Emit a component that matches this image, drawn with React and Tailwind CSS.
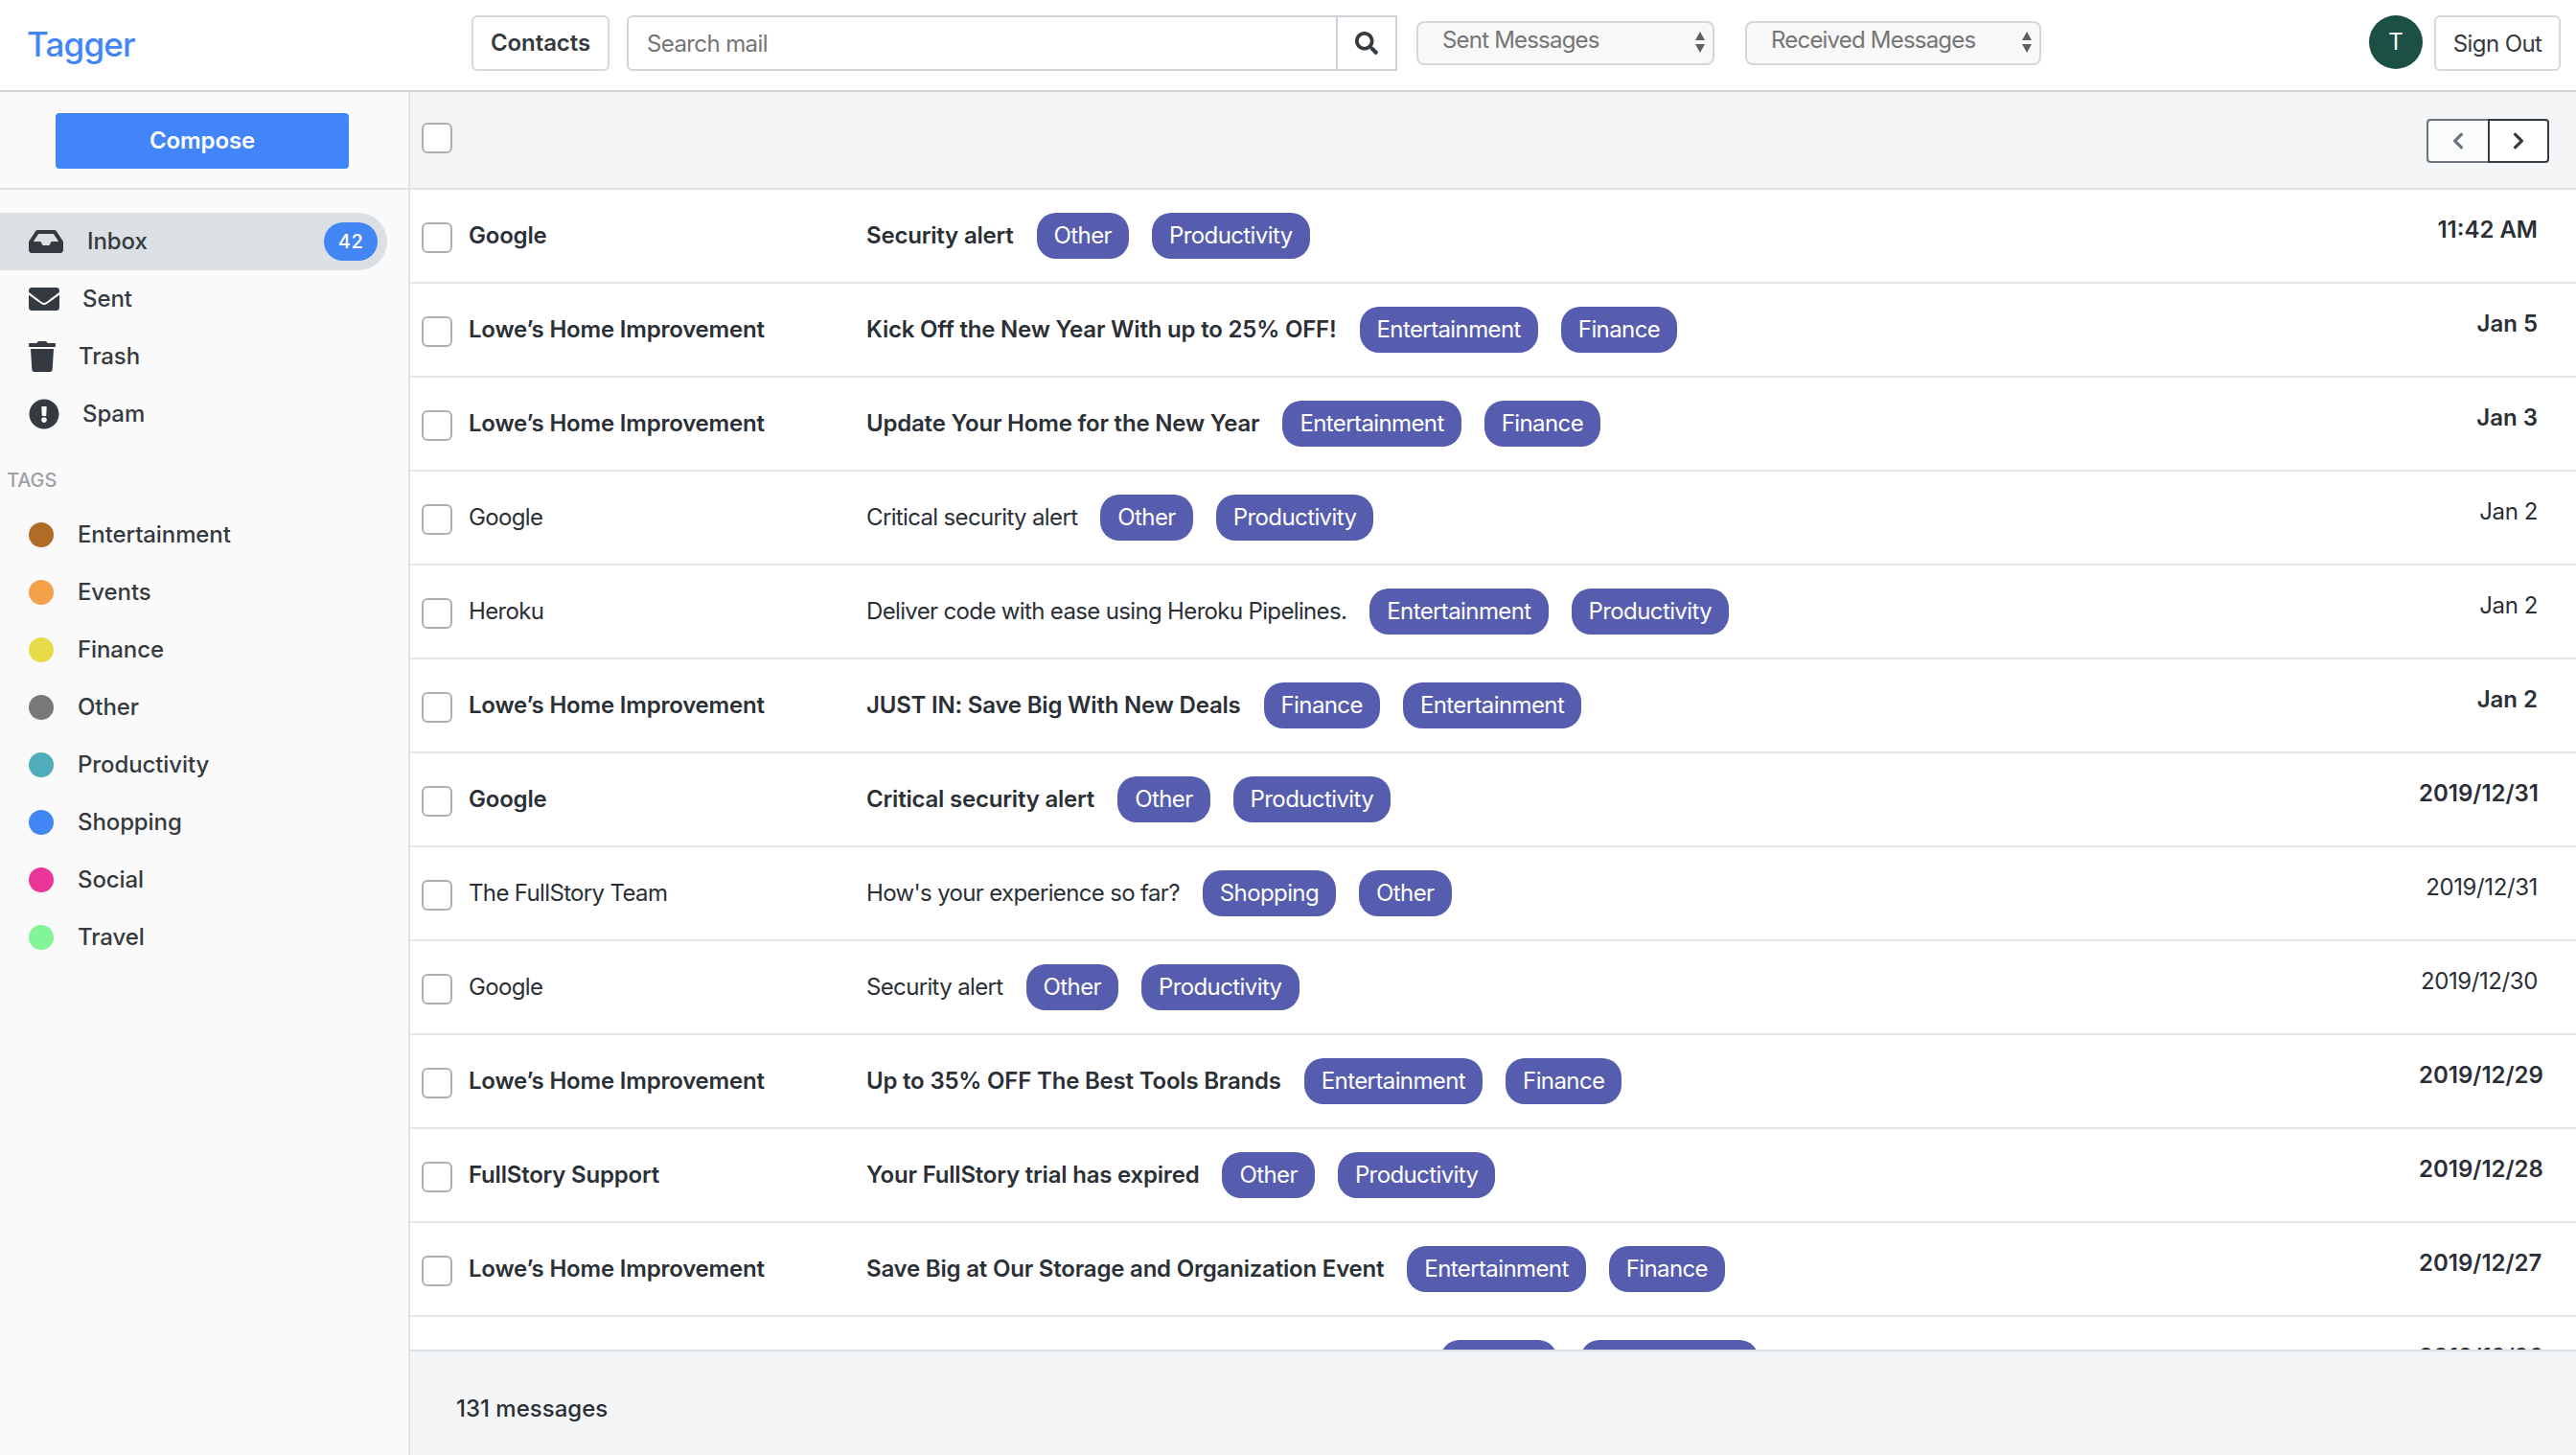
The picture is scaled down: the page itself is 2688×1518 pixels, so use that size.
import React from "react";
import { FaInbox, FaEnvelope, FaTrash, FaExclamationCircle, FaSearch, FaChevronLeft, FaChevronRight } from "react-icons/fa";

// Tagger mail client - inbox screen

const mailboxes = [
  { label: "Inbox", icon: FaInbox, iconClass: "w-[36px] h-[32px]", gap: "gap-[25px]", count: 42, active: true },
  { label: "Sent", icon: FaEnvelope, iconClass: "w-[32px] h-[32px]", gap: "gap-[24px]" },
  { label: "Trash", icon: FaTrash, iconClass: "w-[28px] h-[32px]", gap: "gap-[24px]" },
  { label: "Spam", icon: FaExclamationCircle, iconClass: "w-[32px] h-[32px]", gap: "gap-[24px]" },
];

const tags = [
  { name: "Entertainment", color: "bg-[#b16b28]" },
  { name: "Events", color: "bg-[#f4a24a]" },
  { name: "Finance", color: "bg-[#e6dc48]" },
  { name: "Other", color: "bg-[#787878]" },
  { name: "Productivity", color: "bg-[#4fadbb]" },
  { name: "Shopping", color: "bg-[#4285f4]" },
  { name: "Social", color: "bg-[#ec3598]" },
  { name: "Travel", color: "bg-[#82f596]" },
];

const messages = [
  { from: "Google", subject: "Security alert", tags: ["Other", "Productivity"], date: "11:42 AM", unread: true },
  { from: "Lowe’s Home Improvement", subject: "Kick Off the New Year With up to 25% OFF!", tags: ["Entertainment", "Finance"], date: "Jan 5", unread: true },
  { from: "Lowe’s Home Improvement", subject: "Update Your Home for the New Year", tags: ["Entertainment", "Finance"], date: "Jan 3", unread: true },
  { from: "Google", subject: "Critical security alert", tags: ["Other", "Productivity"], date: "Jan 2" },
  { from: "Heroku", subject: "Deliver code with ease using Heroku Pipelines.", tags: ["Entertainment", "Productivity"], date: "Jan 2" },
  { from: "Lowe’s Home Improvement", subject: "JUST IN: Save Big With New Deals", tags: ["Finance", "Entertainment"], date: "Jan 2", unread: true },
  { from: "Google", subject: "Critical security alert", tags: ["Other", "Productivity"], date: "2019/12/31", unread: true },
  { from: "The FullStory Team", subject: "How's your experience so far?", tags: ["Shopping", "Other"], date: "2019/12/31" },
  { from: "Google", subject: "Security alert", tags: ["Other", "Productivity"], date: "2019/12/30" },
  { from: "Lowe’s Home Improvement", subject: "Up to 35% OFF The Best Tools Brands", tags: ["Entertainment", "Finance"], date: "2019/12/29", unread: true },
  { from: "FullStory Support", subject: "Your FullStory trial has expired", tags: ["Other", "Productivity"], date: "2019/12/28", unread: true },
  { from: "Lowe’s Home Improvement", subject: "Save Big at Our Storage and Organization Event", tags: ["Entertainment", "Finance"], date: "2019/12/27", unread: true },
  { from: "Lowe’s Home Improvement", subject: "Save Big on Appliances and Get Free Delivery Now", tags: ["Finance", "Entertainment"], date: "2019/12/26", unread: true },
];

function Checkbox() {
  return (
    <input
      type="checkbox"
      className="appearance-none w-[32px] h-[32px] shrink-0 rounded-md border-2 border-[#adb0b3] bg-white"
    />
  );
}

function SelectBox({ label, width }) {
  return (
    <div className={`relative ${width}`}>
      <select className="appearance-none w-full h-[46px] pl-[25px] pb-[6px] rounded-lg border-2 border-[#d6d6d6] bg-[#f8f8f8] text-2xl tracking-[-0.8px] text-[#757575] outline-none">
        <option>{label}</option>
      </select>
      <svg className="absolute right-[9px] top-[10px] w-[12px] h-[24px] pointer-events-none" viewBox="0 0 12 24">
        <path d="M6 1 L11 10 L1 10 Z M6 23 L1 14 L11 14 Z" fill="#5f5f5f" />
      </svg>
    </div>
  );
}

function Header() {
  return (
    <header className="h-[96px] shrink-0 flex items-start pt-[16px] bg-white border-b-2 border-[#d2d6da]">
      <div className="w-[492px] shrink-0 pl-[28px] pt-[5px] text-[35px] leading-[50px] font-medium tracking-[-0.8px] text-[#4285f4]">Tagger</div>
      <button className="w-[144px] h-[58px] rounded-md border-2 border-[#d5d9dd] text-2xl font-semibold tracking-[-0.1px] text-[#343a40]">Contacts</button>
      <div className="ml-[18px] flex">
        <input
          placeholder="Search mail"
          className="w-[742px] h-[58px] pl-[19px] rounded-l-md border-2 border-[#ced4da] text-2xl tracking-[-0.6px] text-[#343a40] placeholder:text-[#757575] outline-none"
        />
        <button className="w-[64px] h-[58px] -ml-[2px] flex items-center justify-center border-2 border-[#ced4da] text-[#343a40]">
          <FaSearch className="w-[24px] h-[24px]" />
        </button>
      </div>
      <div className="ml-[20px] mt-[6px] flex gap-[32px]">
        <SelectBox label="Sent Messages" width="w-[311px]" />
        <SelectBox label="Received Messages" width="w-[309px]" />
      </div>
      <div className="ml-auto mr-[16px] flex items-start gap-[12px]">
        <div className="w-[56px] h-[56px] rounded-full bg-[#1d5045] flex items-center justify-center text-2xl text-white">T</div>
        <button className="w-[132px] h-[58px] rounded-md border-2 border-[#d5d9dd] pt-[2px] text-2xl tracking-[-0.6px] text-[#343a40]">Sign Out</button>
      </div>
    </header>
  );
}

function Sidebar() {
  return (
    <aside className="w-[428px] shrink-0 flex flex-col bg-[#fafafa] border-r-2 border-[#e1e4e6] text-2xl font-medium tracking-[-0.1px] text-[#343a40]">
      <div className="h-[102px] shrink-0 pt-[22px] pl-[58px] border-b-2 border-[#dfe3e6] -mr-[2px]">
        <button className="w-[306px] h-[58px] rounded-[4px] bg-[#4285f8] text-2xl font-semibold text-white">Compose</button>
      </div>
      <nav className="mt-[24px] pr-[22px] flex flex-col">
        {mailboxes.map((box) => (
          <div
            key={box.label}
            className={`h-[60px] flex items-center pl-[30px] ${box.gap} ${box.active ? "bg-[#dae0e4] rounded-r-full" : ""}`}
          >
            <box.icon className={`${box.iconClass} shrink-0`} />
            <span className="-mt-[1px]">{box.label}</span>
            {box.count && (
              <span className="ml-auto mr-[10px] w-[56px] h-[40px] rounded-full bg-[#4285f4] flex items-center justify-center text-[20px] font-medium tracking-[0.5px] text-white">
                {box.count}
              </span>
            )}
          </div>
        ))}
      </nav>
      <div className="mt-[24px] pl-[7px] text-[20px] leading-[30px] text-[#9aa0a6]">TAGS</div>
      <div className="mt-[12px] flex flex-col">
        {tags.map((tag) => (
          <div key={tag.name} className="h-[60px] flex items-center pl-[30px] gap-[25px]">
            <span className={`w-[26px] h-[26px] rounded-full shrink-0 ${tag.color}`} />
            <span>{tag.name}</span>
          </div>
        ))}
      </div>
    </aside>
  );
}

function MessageRow({ message }) {
  const weight = message.unread ? "font-semibold tracking-[-0.2px]" : "font-normal tracking-[-0.65px]";
  const dateSpacing = message.unread ? "tracking-[0px]" : "tracking-[-0.4px]";
  return (
    <div className={`h-[98px] shrink-0 flex items-center pl-[12px] pr-[40px] border-b-2 border-[#e3e7ea] text-2xl text-[#2b2f36] ${weight}`}>
      <div className="mt-[4px] flex"><Checkbox /></div>
      <div className="ml-[17px] w-[415px] shrink-0 whitespace-nowrap -mt-[1px]">{message.from}</div>
      <div className="flex-1 flex items-center gap-[24px] whitespace-nowrap">
        <span className="-mt-[1px]">{message.subject}</span>
        {message.tags.map((tag) => (
          <span key={tag} className="h-[48px] px-[18px] rounded-[20px] bg-[#565cae] flex items-center text-2xl font-normal tracking-[-0.6px] text-white">
            {tag}
          </span>
        ))}
      </div>
      <div className={`w-[124px] shrink-0 text-right whitespace-nowrap -mt-[12px] ${dateSpacing}`}>{message.date}</div>
    </div>
  );
}

export default function App() {
  return (
    <div className="h-screen flex flex-col overflow-hidden bg-white font-[Inter,sans-serif]">
      <Header />
      <div className="flex-1 flex min-h-0">
        <Sidebar />
        <main className="flex-1 min-w-0 flex flex-col">
          <div className="h-[102px] shrink-0 flex items-start justify-between pl-[12px] pr-[28px] pt-[28px] bg-[#f4f5f7] border-b-2 border-[#dfe3e6]">
            <div className="pt-[4px]"><Checkbox /></div>
            <div className="flex">
              <button className="w-[64px] h-[46px] flex items-center justify-center rounded-l-[4px] border-2 border-r-0 border-[#6c757d] bg-[#fafbfb] text-[#6c757d]">
                <FaChevronLeft className="w-[14px] h-[20px]" />
              </button>
              <button className="w-[64px] h-[46px] flex items-center justify-center rounded-r-[4px] border-2 border-[#343a40] bg-white text-[#343a40]">
                <FaChevronRight className="w-[14px] h-[20px]" />
              </button>
            </div>
          </div>
          <div className="flex-1 min-h-0 overflow-hidden flex flex-col">
            {messages.map((message, i) => (
              <MessageRow key={i} message={message} />
            ))}
          </div>
          <div className="h-[110px] shrink-0 flex items-center pl-[48px] pt-[12px] bg-[#f4f5f7] border-t-2 border-[#dde1e4] text-2xl font-medium text-[#2b2f36]">
            131 messages
          </div>
        </main>
      </div>
    </div>
  );
}
